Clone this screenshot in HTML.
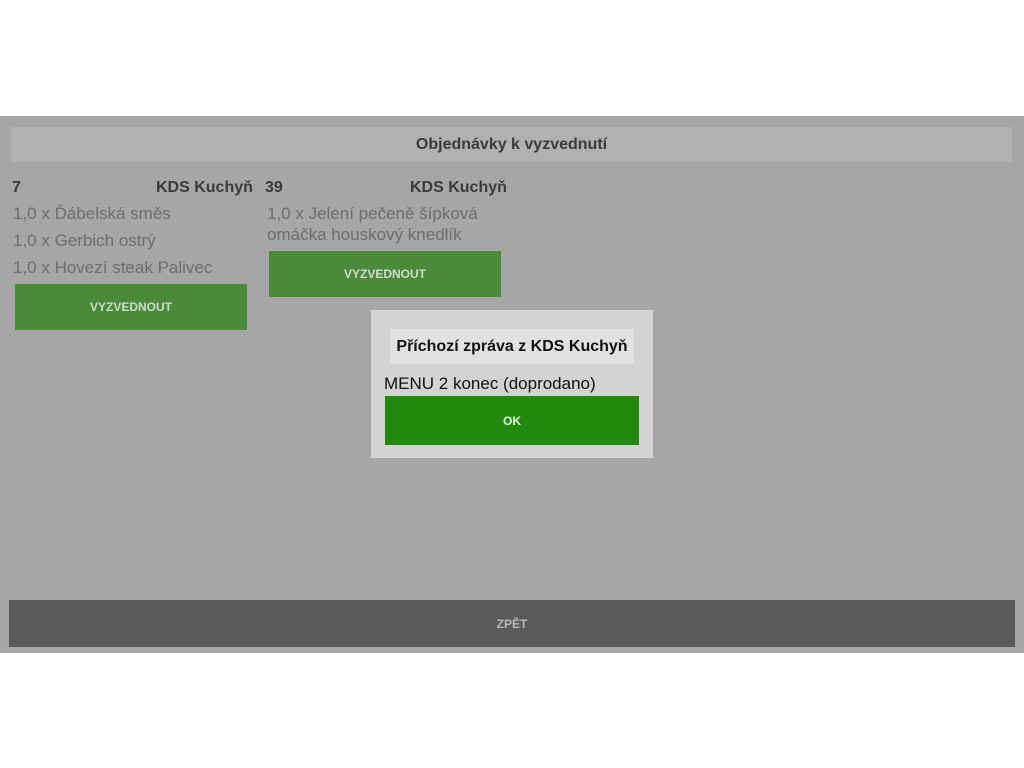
<!DOCTYPE html>
<html><head><meta charset="utf-8"><style>
body{margin:0;width:1024px;height:768px;background:#fff;position:relative;font-family:"Liberation Sans",sans-serif;overflow:hidden}
.a{position:absolute}
.g{background:#a6a6a6;left:0;top:116px;width:1024px;height:537px}
.t{color:#3a3a3a;font-size:16px;white-space:nowrap}
.b{font-weight:bold}
.i{color:#6e6e6e;font-size:17px;white-space:nowrap}
.btn{background:#4b8a3b;color:#cfdccb;font-size:12px;font-weight:bold;display:flex;align-items:center;justify-content:center}
</style></head><body>
<div class="a g"></div>
<div class="a" style="left:11px;top:127px;width:1001px;height:35px;background:#b1b1b1;display:flex;align-items:center;justify-content:center;font-size:16px;font-weight:bold;color:#3a3a3a">Objednávky k vyzvednutí</div>
<div class="a t b" style="left:12px;top:179px">7</div>
<div class="a t b" style="left:156px;top:179px">KDS Kuchyň</div>
<div class="a t b" style="left:265px;top:179px">39</div>
<div class="a t b" style="left:410px;top:179px">KDS Kuchyň</div>
<div class="a i" style="left:13px;top:204px">1,0 x Ďábelská směs</div>
<div class="a i" style="left:13px;top:231px">1,0 x Gerbich ostrý</div>
<div class="a i" style="left:13px;top:258px">1,0 x Hovezí steak Palivec</div>
<div class="a i" style="left:267px;top:204px">1,0 x Jelení pečeně šípková</div>
<div class="a i" style="left:267px;top:225px">omáčka houskový knedlík</div>
<div class="a btn" style="left:15px;top:284px;width:232px;height:46px">VYZVEDNOUT</div>
<div class="a btn" style="left:269px;top:251px;width:232px;height:46px">VYZVEDNOUT</div>
<div class="a" style="left:371px;top:310px;width:282px;height:148px;background:#d3d3d3"></div>
<div class="a" style="left:390px;top:329px;width:244px;height:35px;background:#e1e1e1;display:flex;align-items:center;justify-content:center;font-size:16px;font-weight:bold;color:#111">Příchozí zpráva z KDS Kuchyň</div>
<div class="a" style="left:384px;top:374px;font-size:17px;color:#111;white-space:nowrap">MENU 2 konec (doprodano)</div>
<div class="a" style="left:385px;top:396px;width:254px;height:49px;background:#228a0f;color:#e8f2e4;font-size:12px;font-weight:bold;display:flex;align-items:center;justify-content:center">OK</div>
<div class="a" style="left:9px;top:600px;width:1006px;height:47px;background:#5a5a5a;color:#b8b8b8;font-size:12px;font-weight:bold;display:flex;align-items:center;justify-content:center">ZPĚT</div>
</body></html>
